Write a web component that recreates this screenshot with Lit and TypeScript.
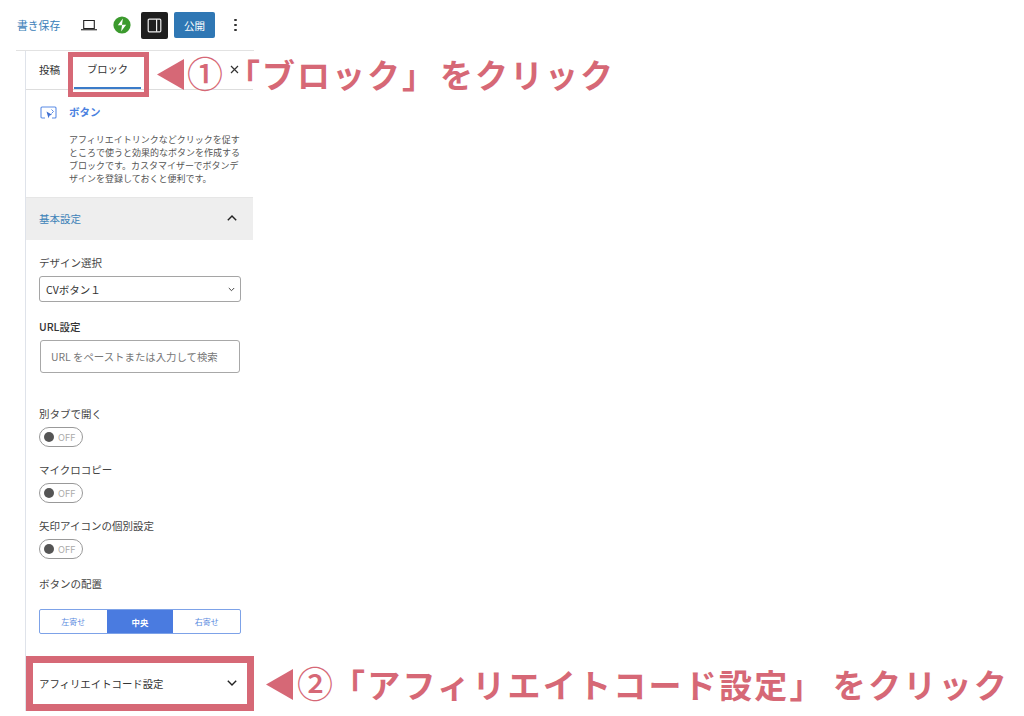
import { LitElement, html, css } from "lit";
import { customElement } from "lit/decorators.js";

@customElement("app-root")
export class AppRoot extends LitElement {
  static styles = css`
    :host {
      display: block;
      position: relative;
      width: 1024px;
      height: 716px;
      overflow: hidden;
      background: #fff;
      color: #333;
      font-family: "Noto Sans CJK JP", "Inter", sans-serif;
      font-size: 10.5px;
    }
    .top {
      height: 50px;
      box-sizing: border-box;
      display: flex;
      align-items: center;
      padding: 0 0 0 17px;
    }
    .save { color: #3b80b8; font-size: 10.8px; width: 64px; }
    .laptop { width: 16px; height: 12px; display: block; }
    .jet { width: 18px; height: 18px; margin-left: 16px; display: block; }
    .toggle-btn {
      width: 27px; height: 27px; margin-left: 10px; background: #1e1e1e; border-radius: 2px;
      display: flex; align-items: center; justify-content: center;
    }
    .publish {
      width: 41px; height: 26px; margin-left: 6px; background: #2f77b4; color: #fff; border-radius: 2px;
      display: flex; align-items: center; justify-content: center; font-size: 10.5px;
    }
    .dots { width: 3px; margin-left: 19px; display: flex; flex-direction: column; gap: 2.5px; }
    .dots i { width: 2.5px; height: 2.5px; border-radius: 50%; background: #333; display: block; }
    .panel {
      margin-left: 25px;
      width: 228px;
      height: 660px;
      box-sizing: border-box;
      border-left: 1px solid #dfe3ea;
      display: flex;
      flex-direction: column;
    }
    .topline { height: 1px; background: #e2e2e2; margin: 0 0 0 16px; width: 238px; }
    .tabs {
      height: 38px;
      border-bottom: 1px solid #ddd;
      display: flex;
      align-items: stretch;
      padding-left: 13px;
    }
    .tab { display: flex; align-items: center; color: #333; font-size: 10.6px; padding-bottom: 2px; box-sizing: border-box; }
    .tab.first { width: 35px; }
    .tab.active {
      width: 67px; justify-content: center; border-bottom: 2px solid #3b7cc9;
      font-size: 10.3px; padding-bottom: 1px;
    }
    .close { margin-left: auto; margin-right: 14px; padding-bottom: 2px; display: flex; align-items: center; }
    .close svg { width: 9px; height: 9px; display: block; }
    .info { height: 107px; box-sizing: border-box; padding: 15px 12px 0 14px; display: flex; gap: 12px; }
    .info svg { width: 17px; height: 14px; flex: none; display: block; margin-top: 1px; }
    .info h2 { margin: 0 0 14px; font-size: 10.5px; line-height: 14px; color: #4a7fe0; font-weight: 700; }
    .info p { margin: 0; font-size: 9px; line-height: 13px; color: #555; white-space: nowrap; }
    .acc-head {
      height: 43px;
      box-sizing: border-box;
      background: #eee;
      display: flex;
      align-items: center;
      justify-content: space-between;
      padding: 0 16px 2px 13px;
      color: #3c82b8;
      font-size: 10.5px;
      border-top: 1px solid #e6e6e6;
    }
    .acc-head svg, .foot svg { width: 10px; height: 6px; display: block; }
    .form { padding: 15px 12px 0 13px; display: flex; flex-direction: column; }
    .label { font-size: 10.5px; line-height: 16px; color: #444; }
    .select {
      margin-top: 5px;
      height: 26px;
      box-sizing: border-box;
      border: 1px solid #a5a5a5;
      border-radius: 3px;
      display: flex;
      align-items: center;
      justify-content: space-between;
      padding: 0 5px 0 6px;
      font-size: 10.5px;
      color: #333;
    }
    .select svg { width: 7px; height: 5px; display: block; }
    .url { margin-top: 17px; font-weight: 500; color: #333; }
    .input {
      margin: 5px 1px 0;
      height: 33px;
      box-sizing: border-box;
      border: 1px solid #a8a8a8;
      border-radius: 3px;
      display: flex;
      align-items: center;
      padding-left: 10px;
      font-size: 10.4px;
      color: #777;
    }
    .field { display: flex; flex-direction: column; gap: 5px; height: 56px; }
    .first-field { margin-top: 33px; }
    .sw {
      width: 44px; height: 20px; box-sizing: border-box; border: 1px solid #999; border-radius: 10px;
      display: flex; align-items: center; gap: 4px; padding-left: 4px; color: #aaa; font-size: 9px;
      font-family: "Inter", sans-serif;
    }
    .sw i { width: 10px; height: 10px; border-radius: 50%; background: #555; display: block; }
    .place { margin-top: 2px; }
    .seg {
      margin-top: 17px;
      height: 25px;
      box-sizing: border-box;
      border: 1px solid #7da2e8;
      border-radius: 2px;
      display: grid;
      grid-template-columns: 1fr 1fr 1fr;
      font-size: 8px;
      color: #5b8be0;
    }
    .seg span { display: flex; align-items: center; justify-content: center; }
    .seg .on { background: #4a7be0; color: #fff; font-weight: 700; font-size: 8.4px; }
    .foot {
      margin-top: auto;
      height: 54px;
      box-sizing: border-box;
      display: flex;
      align-items: center;
      justify-content: space-between;
      padding: 0 16px 2px 13px;
      font-size: 10.4px;
      color: #333;
    }
    .box { position: absolute; box-sizing: border-box; border-style: solid; border-color: #d66876; }
    .box1 { left: 68px; top: 52px; width: 81px; height: 45px; border-width: 5px; }
    .box2 { left: 26px; top: 656px; width: 228px; height: 55px; border-width: 7px; }
    .tri { position: absolute; display: block; }
    .tri1 { left: 157px; top: 59px; width: 27px; height: 31px; }
    .tri2 { left: 266px; top: 669px; width: 27px; height: 31px; }
    .note {
      position: absolute;
      color: #d66876;
      font-weight: 700;
      font-size: 33px;
      line-height: 40px;
      white-space: nowrap;
    }
    .note1 { left: 187px; top: 52px; letter-spacing: 2px; }
    .note2 { left: 297px; top: 662px; letter-spacing: 2.25px; }
    .num { font-weight: 500; font-size: 36px; letter-spacing: 0; }
    .note1 .num { margin-right: 4px; }
    .note2 .num { margin-right: -1px; }
    .note1 .gap { display: inline-block; width: 3px; }
    .note2 .gap { display: inline-block; width: 8px; }
  `;

  render() {
    const chevDown = html`<svg viewBox="0 0 10 6"><path d="M.8.8L5 5l4.2-4.2" fill="none" stroke="#222" stroke-width="1.4"/></svg>`;
    const field = (t: string) => html`<div class="field"><span class="label">${t}</span><div class="sw"><i></i>OFF</div></div>`;
    return html`
      <div class="top">
        <span class="save">書き保存</span>
        <svg class="laptop" viewBox="0 0 16 12"><path d="M2.7 1.5h10.6v8H2.7z" fill="none" stroke="#222" stroke-width="1.1"/><path d="M0 10.2h16v1.1H0z" fill="#222"/></svg>
        <svg class="jet" viewBox="0 0 18 18"><circle cx="9" cy="9" r="8.6" fill="#3b9a2d"/><path d="M9.9 2.6L8.9 9.3H4.8zM8.1 15.4l1-6.7h4.1z" fill="#fff"/></svg>
        <div class="toggle-btn"><svg width="15" height="15" viewBox="0 0 15 15"><rect x="1.2" y="1.2" width="12.6" height="12.6" rx="1" fill="none" stroke="#eee" stroke-width="1.2"/><path d="M9 1.2h1.2v12.6H9z" fill="#eee"/></svg></div>
        <div class="publish">公開</div>
        <div class="dots"><i></i><i></i><i></i></div>
      </div>
      <div class="topline"></div>
      <div class="panel">
        <div class="tabs">
          <div class="tab first">投稿</div>
          <div class="tab active">ブロック</div>
          <div class="close"><svg viewBox="0 0 9 9"><path d="M1 1l7 7M8 1L1 8" stroke="#333" stroke-width="1.2"/></svg></div>
        </div>
        <div class="info">
          <svg viewBox="0 0 17 14"><path d="M5 12H2a1 1 0 0 1-1-1V2a1 1 0 0 1 1-1h13a1 1 0 0 1 1 1v9a1 1 0 0 1-1 1h-3" fill="none" stroke="#5b8ce6" stroke-width="1.1"/><path d="M6.5 5.5l5.5 3.2-2.4.7-1.1 2.8z" fill="#3f6fd0"/><path d="M11.5 3.5l2 2-2 2" fill="none" stroke="#5b8ce6" stroke-width="1"/></svg>
          <div>
            <h2>ボタン</h2>
            <p>アフィリエイトリンクなどクリックを促す<br>ところで使うと効果的なボタンを作成する<br>ブロックです。カスタマイザーでボタンデ<br>ザインを登録しておくと便利です。</p>
          </div>
        </div>
        <div class="acc-head"><span>基本設定</span><svg viewBox="0 0 10 6"><path d="M.8 5.2L5 1l4.2 4.2" fill="none" stroke="#222" stroke-width="1.4"/></svg></div>
        <div class="form">
          <span class="label">デザイン選択</span>
          <div class="select"><span>CVボタン１</span><svg viewBox="0 0 7 5"><path d="M.8 1l2.7 2.7L6.2 1" fill="none" stroke="#444" stroke-width="1"/></svg></div>
          <span class="label url">URL設定</span>
          <div class="input">URL をペーストまたは入力して検索</div>
          <div class="first-field"></div>
          ${field("別タブで開く")}
          ${field("マイクロコピー")}
          ${field("矢印アイコンの個別設定")}
          <span class="label place">ボタンの配置</span>
          <div class="seg"><span>左寄せ</span><span class="on">中央</span><span>右寄せ</span></div>
        </div>
        <div class="foot"><span>アフィリエイトコード設定</span>${chevDown}</div>
      </div>
      <div class="box box1"></div>
      <div class="box box2"></div>
      <svg class="tri tri1" viewBox="0 0 27 31"><path d="M27 0v31L0 15.5z" fill="#d66876"/></svg>
      <svg class="tri tri2" viewBox="0 0 27 31"><path d="M27 0v31L0 15.5z" fill="#d66876"/></svg>
      <div class="note note1"><span class="num">①</span>「ブロック」<span class="gap"></span>をクリック</div>
      <div class="note note2"><span class="num">②</span>「アフィリエイトコード設定」<span class="gap"></span>をクリック</div>
    `;
  }
}
